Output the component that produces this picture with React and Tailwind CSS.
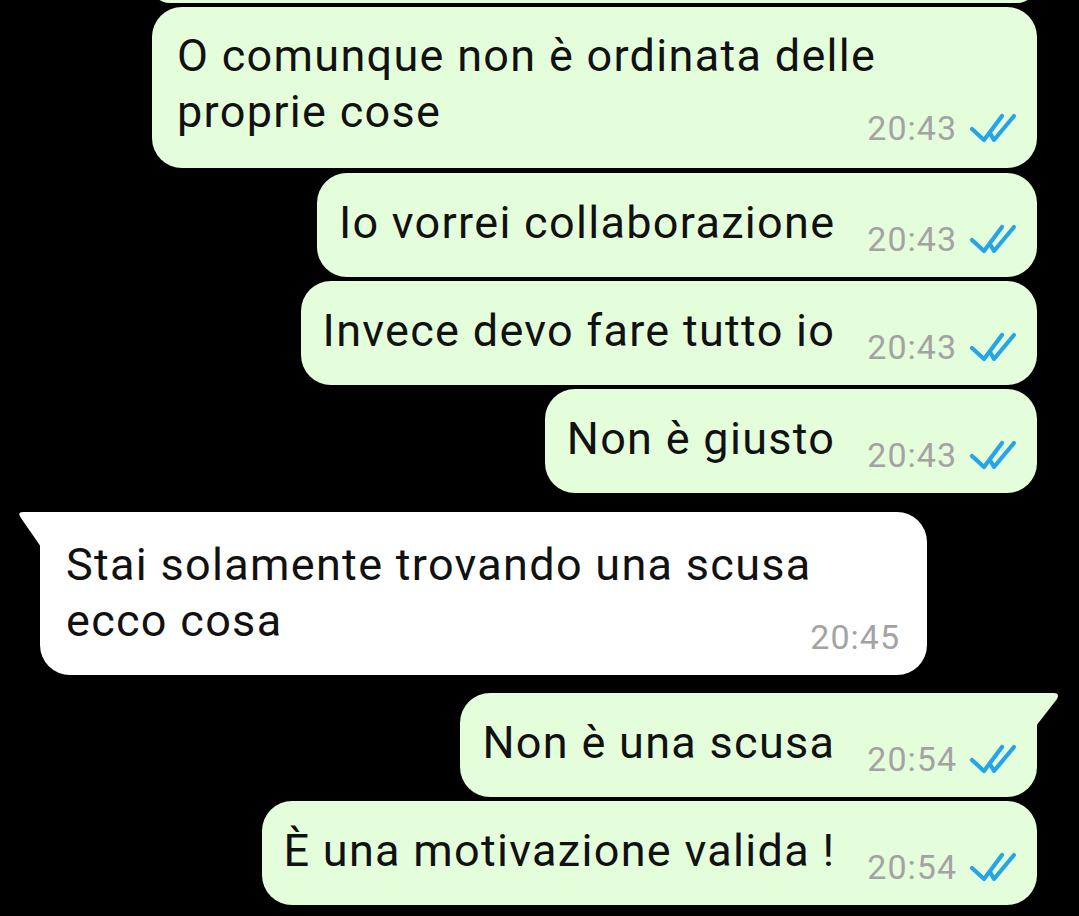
import React from 'react';

const font = { fontFamily: 'Roboto, "Noto Sans", sans-serif' };

const Ticks = () => (
  <svg width="48" height="30" viewBox="0 0 48 30" fill="none" className="shrink-0">
    <path d="M3 16 L15 27 L33 3" stroke="#26a4e8" strokeWidth="4.2" strokeLinecap="round" strokeLinejoin="round" />
    <path d="M21 20 L25 27 L45 3" stroke="#26a4e8" strokeWidth="4.2" strokeLinecap="round" strokeLinejoin="round" />
  </svg>
);

const Meta = ({ time, read }) => (
  <div className="flex items-end gap-[12px] shrink-0 leading-none">
    <span className="text-[34px] leading-[34px] tracking-[1px] text-[#a3a3a3]">{time}</span>
    {read && <span className="mb-[2px]"><Ticks /></span>}
  </div>
);

const OutTail = () => (
  <svg width="24" height="34" viewBox="0 0 24 34" className="absolute left-full top-0 -ml-px">
    <path d="M0 0 H18 Q24 0 21 6 L0 33 Z" fill="#e4fddb" />
  </svg>
);

const InTail = () => (
  <svg width="22" height="36" viewBox="0 0 22 36" className="absolute right-full top-0 -mr-px">
    <path d="M22 0 H4 Q-2 0 2 6 L22 35 Z" fill="#ffffff" />
  </svg>
);

const msgText = 'text-[45px] leading-[56px] tracking-[1.3px] text-[#111111] mb-[5px]';

const Sent = ({ text, time, tail }) => (
  <div className={`relative flex items-end gap-[32px] bg-[#e4fddb] rounded-[30px] pl-[22px] pr-[20px] pt-[22px] pb-[21px] ${tail ? 'rounded-tr-none' : ''}`}>
    <span className={`${msgText} whitespace-nowrap`}>{text}</span>
    <Meta time={time} read />
    {tail && <OutTail />}
  </div>
);

export default function App() {
  return (
    <div className="w-full h-[916px] bg-black overflow-hidden" style={font}>
      <div className="flex flex-col items-end pr-[42px]">
        {/* previous bubble, cut off by the top of the screen */}
        <div className="w-[887px] h-[40px] -mt-[37px] bg-[#e4fddb] rounded-[30px]" />

        <div className="mt-[4px] w-[885px] flex flex-col bg-[#e4fddb] rounded-[30px] pl-[25px] pr-[20px] pt-[21px] pb-[23px]">
          <span className={msgText}>
            O comunque non è ordinata delle<br />proprie cose
          </span>
          <div className="self-end -mt-[34px]">
            <Meta time="20:43" read />
          </div>
        </div>

        <div className="mt-[5px]"><Sent text="Io vorrei collaborazione" time="20:43" /></div>
        <div className="mt-[4px]"><Sent text="Invece devo fare tutto io" time="20:43" /></div>
        <div className="mt-[4px]"><Sent text="Non è giusto" time="20:43" /></div>

        <div className="self-start ml-[40px] mt-[19px] relative w-[887px] flex flex-col bg-white rounded-[30px] rounded-tl-none pl-[26px] pr-[27px] pt-[25px] pb-[21px]">
          <span className={msgText}>
            Stai solamente trovando una scusa<br />ecco cosa
          </span>
          <div className="self-end -mt-[34px]">
            <Meta time="20:45" />
          </div>
          <InTail />
        </div>

        <div className="mt-[18px]"><Sent text="Non è una scusa" time="20:54" tail /></div>
        <div className="mt-[4px]"><Sent text="È una motivazione valida !" time="20:54" /></div>
      </div>
    </div>
  );
}
